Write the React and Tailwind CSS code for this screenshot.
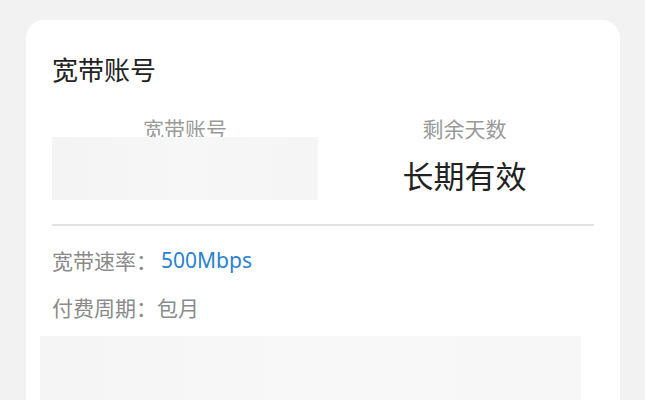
export default function App() {
  const font = { fontFamily: '"Noto Sans CJK SC", "Noto Sans", sans-serif' };
  return (
    <div className="w-[645px] h-[400px] overflow-hidden bg-[#f2f2f2]" style={font}>
      <div className="ml-[26px] mt-[20px] w-[594px] h-[420px] rounded-[18px] bg-white pl-[26px] pr-[26px]">
        <div className="pt-[31px] text-[26px] leading-[35px] text-[#222]">宽带账号</div>
        <div className="mt-[28px] flex">
          <div className="w-[266px] shrink-0 flex flex-col items-center">
            <div className="text-[21px] leading-[28px] text-[#9a9a9a]">宽带账号</div>
            <div className="mt-[-5px] h-[63px] w-[266px] bg-gradient-to-r from-[#f4f4f4] via-[#f7f7f7] to-[#f5f5f5]"></div>
          </div>
          <div className="w-[293px] shrink-0 flex flex-col items-center">
            <div className="text-[21px] leading-[28px] text-[#999]">剩余天数</div>
            <div className="mt-[13px] text-[31px] leading-[40px] text-[#222]">长期有效</div>
          </div>
        </div>
        <div className="mt-[24px] h-[2px] w-[542px] bg-[#e2e2e2]"></div>
        <div className="mt-[20px] flex items-center text-[21px] leading-[28px] text-[#8a8a8a]">
          <span>宽带速率：</span>
          <span className="text-[#2a82d0] ml-[4px]" style={{ fontFamily: '"Noto Sans", sans-serif' }}>500Mbps</span>
        </div>
        <div className="mt-[19px] text-[21px] leading-[28px] text-[#8a8a8a]">付费周期：包月</div>
        <div className="mt-[15px] ml-[-12px] h-[80px] w-[541px] bg-gradient-to-r from-[#f5f5f5] via-[#f8f8f8] to-[#f7f7f7]"></div>
      </div>
    </div>
  );
}
